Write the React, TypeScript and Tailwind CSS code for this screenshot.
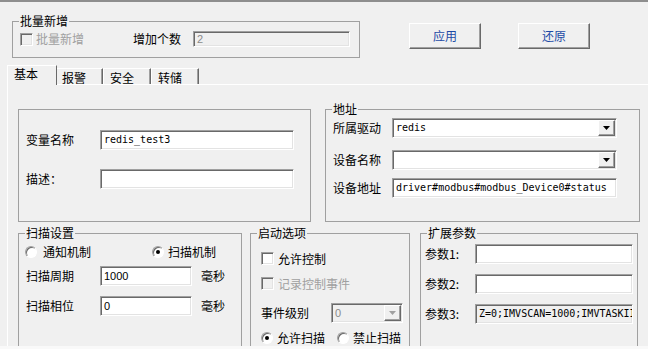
import React from 'react'

// classic win32 bevels
const sunken =
  'border border-t-[#a0a0a0] border-l-[#a0a0a0] border-r-white border-b-white shadow-[inset_1px_1px_0_#696969,inset_-1px_-1px_0_#e3e3e3]'
const raised =
  'border border-t-white border-l-white border-r-[#696969] border-b-[#696969] shadow-[inset_-1px_-1px_0_#a0a0a0]'

function Group({ title, className = '', children }: { title?: string; className?: string; children?: React.ReactNode }) {
  return (
    <fieldset className={`border border-[#a0a0a0] shrink-0 ${className}`}>
      {title && <legend className="ml-[6px] px-[1px] leading-[14px]">{title}</legend>}
      {children}
    </fieldset>
  )
}

function TextBox({ value = '', className = '', mono, disabled, muted }: { value?: string; className?: string; mono?: boolean; disabled?: boolean; muted?: boolean }) {
  return (
    <div
      className={`${sunken} h-[20px] flex items-center pl-[3px] overflow-hidden whitespace-nowrap ${disabled ? 'bg-[#f0f0f0]' : 'bg-white'} ${muted ? 'text-[#8a8a8a]' : 'text-black'} ${mono ? "font-['DejaVu_Sans_Mono',monospace] text-[10px]" : "font-['Liberation_Sans',sans-serif] text-[11px]"} ${className}`}
    >
      {value}
    </div>
  )
}

function Arrow({ disabled }: { disabled?: boolean }) {
  return (
    <div className={`${raised} w-[17px] h-[16px] mr-[1px] bg-[#f0f0f0] flex items-center justify-center shrink-0`}>
      <svg width="7" height="4" viewBox="0 0 7 4">
        <polygon points="0,0 7,0 3.5,4" fill={disabled ? '#a0a0a0' : '#000'} />
      </svg>
    </div>
  )
}

function Combo({ value = '', className = '', disabled }: { value?: string; className?: string; disabled?: boolean }) {
  return (
    <div className={`${sunken} h-[20px] flex items-center ${disabled ? 'bg-[#f0f0f0]' : 'bg-white'} ${className}`}>
      <span
        className={`flex-1 pl-[3px] ${disabled ? "text-[#8a8a8a] font-['Liberation_Sans',sans-serif] text-[11px]" : "font-['DejaVu_Sans_Mono',monospace] text-[10px]"}`}
      >
        {value}
      </span>
      <Arrow disabled={disabled} />
    </div>
  )
}

function Check({ disabled }: { disabled?: boolean }) {
  return <div className={`w-[13px] h-[13px] shrink-0 ${sunken} ${disabled ? 'bg-[#f0f0f0]' : 'bg-white'}`} />
}

function Radio({ checked }: { checked?: boolean }) {
  return (
    <div className="w-[12px] h-[12px] shrink-0 rounded-full border border-t-[#a0a0a0] border-l-[#a0a0a0] border-r-white border-b-white bg-white shadow-[inset_1px_1px_0_#696969] flex items-center justify-center">
      {checked && <div className="w-[4px] h-[4px] rounded-full bg-black" />}
    </div>
  )
}

export default function App() {
  return (
    <div className="w-[648px] h-[349px] overflow-hidden bg-[#f0f0f0] border-t-2 border-[#8e8e8e] text-[12px] leading-[14px] text-black font-['Noto_Sans_CJK_SC','Liberation_Sans',sans-serif]">
      {/* top strip */}
      <div className="flex items-start">
        <Group title="批量新增" className="ml-[12px] mt-[12px] w-[348px] h-[44px]">
          <div className="flex items-center h-[16px] mt-[3px]">
            <div className="ml-[7px]">
              <Check disabled />
            </div>
            <span className="ml-[3px] text-[#a0a0a0]">批量新增</span>
            <span className="ml-[49px]">增加个数</span>
            <TextBox value="2" disabled muted className="ml-[12px] w-[157px] !h-[16px]" />
          </div>
        </Group>
        <button className={`${raised} ml-[49px] mt-[21px] w-[72px] h-[26px] text-[#1c4aa6]`}>应用</button>
        <button className={`${raised} ml-[37px] mt-[21px] w-[72px] h-[26px] text-[#1c4aa6]`}>还原</button>
      </div>

      {/* tabs */}
      <div className="flex items-end ml-[7px] mt-[7px] h-[19px]">
        <div className="relative z-10 -mb-px h-[20px] w-[50px] pl-[6px] pt-[1px] bg-[#f0f0f0] border-l border-t border-white border-r border-r-[#696969]">
          基本
        </div>
        <div className="h-[16px] w-[46px] pl-[5px] pt-[2px] border-t border-white border-r border-r-[#696969] shadow-[inset_-1px_0_0_#a0a0a0]">
          报警
        </div>
        <div className="h-[16px] w-[48px] pl-[6px] pt-[2px] border-t border-l border-white border-r border-r-[#696969] shadow-[inset_-1px_0_0_#a0a0a0]">
          安全
        </div>
        <div className="h-[16px] w-[48px] pl-[6px] pt-[2px] border-t border-l border-white border-r border-r-[#696969] shadow-[inset_-1px_0_0_#a0a0a0]">
          转储
        </div>
      </div>

      {/* tab page */}
      <div className="ml-[7px] h-[262px] border-t border-l border-white overflow-hidden">
        <div className="flex items-start">
          <Group className="ml-[10px] mt-[24px] w-[293px] h-[113px]">
            <div className="flex items-center h-[20px] mt-[20px]">
              <span className="w-[81px] pl-[7px]">变量名称</span>
              <TextBox value="redis_test3" mono className="w-[194px]" />
            </div>
            <div className="flex items-center h-[20px] mt-[19px]">
              <span className="w-[81px] pl-[7px]">描述：</span>
              <TextBox className="w-[194px]" />
            </div>
          </Group>

          <Group title="地址" className="ml-[14px] mt-[17px] w-[315px] h-[120px]">
            <div className="flex items-center h-[20px] mt-[2px]">
              <span className="w-[66px] pl-[7px]">所属驱动</span>
              <Combo value="redis" className="w-[225px]" />
            </div>
            <div className="flex items-center h-[20px] mt-[12px]">
              <span className="w-[66px] pl-[7px]">设备名称</span>
              <Combo className="w-[225px]" />
            </div>
            <div className="flex items-center h-[20px] mt-[8px]">
              <span className="w-[66px] pl-[7px]">设备地址</span>
              <TextBox value="driver#modbus#modbus_Device0#status" mono className="w-[225px]" />
            </div>
          </Group>
        </div>

        <div className="flex items-start mt-[4px]">
          <Group title="扫描设置" className="ml-[10px] w-[224px] h-[130px]">
            <div className="flex items-center h-[14px] mt-[5px]">
              <div className="ml-[6px]">
                <Radio />
              </div>
              <span className="ml-[6px]">通知机制</span>
              <div className="ml-[61px]">
                <Radio checked />
              </div>
              <span className="ml-[4px]">扫描机制</span>
            </div>
            <div className="flex items-center h-[20px] mt-[7px]">
              <span className="w-[81px] pl-[7px]">扫描周期</span>
              <TextBox value="1000" className="w-[92px]" />
              <span className="ml-[9px]">毫秒</span>
            </div>
            <div className="flex items-center h-[20px] mt-[10px]">
              <span className="w-[81px] pl-[7px]">扫描相位</span>
              <TextBox value="0" className="w-[92px]" />
              <span className="ml-[9px]">毫秒</span>
            </div>
          </Group>

          <Group title="启动选项" className="ml-[8px] w-[160px] h-[130px]">
            <div className="flex items-center h-[13px] mt-[12px]">
              <div className="ml-[10px]">
                <Check />
              </div>
              <span className="ml-[4px]">允许控制</span>
            </div>
            <div className="flex items-center h-[13px] mt-[12px]">
              <div className="ml-[10px]">
                <Check disabled />
              </div>
              <span className="ml-[4px] text-[#a0a0a0]">记录控制事件</span>
            </div>
            <div className="flex items-center h-[20px] mt-[13px]">
              <span className="w-[80px] pl-[10px]">事件级别</span>
              <Combo value="0" disabled className="w-[72px]" />
            </div>
            <div className="flex items-center h-[14px] mt-[8px]">
              <div className="ml-[10px]">
                <Radio checked />
              </div>
              <span className="ml-[4px]">允许扫描</span>
              <div className="ml-[12px]">
                <Radio />
              </div>
              <span className="ml-[4px]">禁止扫描</span>
            </div>
          </Group>

          <Group title="扩展参数" className="ml-[10px] w-[218px] h-[130px]">
            <div className="flex items-center h-[20px] mt-[4px]">
              <span className="w-[54px] pl-[4px]">参数1:</span>
              <TextBox className="w-[158px]" />
            </div>
            <div className="flex items-center h-[20px] mt-[10px]">
              <span className="w-[54px] pl-[4px]">参数2:</span>
              <TextBox className="w-[158px]" />
            </div>
            <div className="flex items-center h-[20px] mt-[10px]">
              <span className="w-[54px] pl-[4px]">参数3:</span>
              <TextBox value="Z=0;IMVSCAN=1000;IMVTASKII" mono disabled className="w-[158px]" />
            </div>
          </Group>
        </div>
      </div>
      <div className="h-[3px] bg-[#f9f9f9]" />
    </div>
  )
}
